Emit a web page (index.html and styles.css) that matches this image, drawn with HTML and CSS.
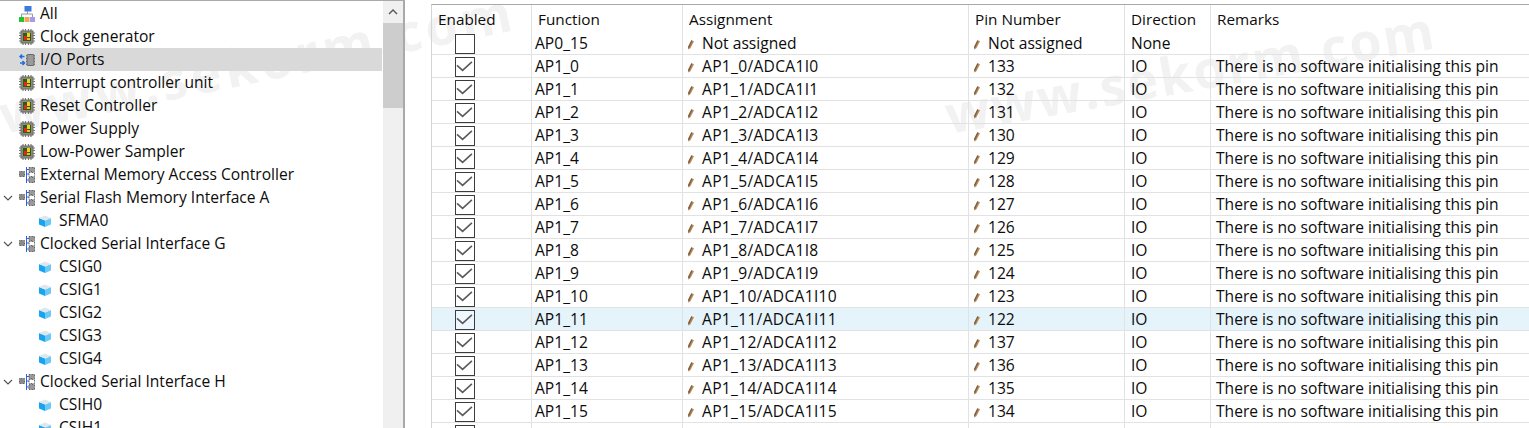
FILE: index.html
```html
<!DOCTYPE html>
<html lang="en">
<head>
<meta charset="utf-8">
<title>Pins</title>
<link rel="stylesheet" href="styles.css">
</head>
<body>
<svg class="defs" width="0" height="0" aria-hidden="true">
  <symbol id="i-all" viewBox="0 0 16 16">
    <rect x="5.500" y="0" width="7" height="5.500" fill="#3f78e0"/><path d="M8.500 5v3M2.500 11V8h11v3" fill="none" stroke="#9a9a9a"/>
    <rect x="0" y="11" width="5" height="5" fill="#22c52e"/><rect x="5.500" y="11" width="5" height="5" fill="#f2a65a"/><rect x="11" y="11" width="5" height="5" fill="#a59af0"/>
  </symbol>
  <symbol id="i-chip" viewBox="0 0 16 16">
    <path d="M0 4h16M0 6.500h16M0 9.500h16M0 12h16M4 0v16M6.500 0v16M9.500 0v16M12 0v16" stroke="#777" stroke-width="1.200"/>
    <rect x="2" y="2" width="12" height="12" fill="#8b8d78" stroke="#6a6a6a"/>
    <rect x="4" y="4" width="8" height="8" fill="#2f5a1e"/><rect x="8" y="4" width="3" height="4" fill="#f2d21e"/><rect x="5" y="7" width="3" height="4" fill="#d92a1c"/><rect x="8" y="9" width="3" height="2" fill="#e8c020"/>
  </symbol>
  <symbol id="i-io" viewBox="0 0 16 16">
    <path d="M5.500 4.500H1m2-2-2 2 2 2M1 11h4.500M3.500 9l2 2-2 2" fill="none" stroke="#1c6fe0" stroke-width="1.500"/>
    <path d="M7 3.500h9M7 6.500h9M7 9.500h9M7 12.500h9" stroke="#777" stroke-dasharray="1 .6"/><rect x="8" y="2.500" width="7" height="11" rx="1" fill="#9a9a9a" stroke="#666"/>
  </symbol>
  <symbol id="i-group" viewBox="0 0 16 16">
    <rect x="0.500" y="4.500" width="5" height="5" fill="#8a8a8a" stroke="#666" stroke-dasharray="1 .5"/>
    <path d="M7.500 0v16M7.500 2.500h3M7.500 7h3M7.500 13h3" stroke="#2b5fe8" fill="none"/>
    <rect x="10" y="0.500" width="5.500" height="4" fill="#999" stroke="#666" stroke-dasharray="1 .5"/><rect x="10" y="5.500" width="5.500" height="4" fill="#fff" stroke="#666" stroke-dasharray="1 .5"/><rect x="10" y="10.500" width="5.500" height="5" fill="#999" stroke="#666" stroke-dasharray="1 .5"/>
  </symbol>
  <symbol id="i-cube" viewBox="0 0 12 12">
    <path d="M0 3 6 5.500V12L0 9.500Z" fill="#18a4ee"/><path d="M6 5.500 12 3v6.500L6 12Z" fill="#6cc8f6"/><path d="M0 3 6 .5 12 3 6 5.500Z" fill="#dfe7ec"/>
  </symbol>
  <symbol id="i-chev" viewBox="0 0 10 6"><path d="M1 1l4 4 4-4" fill="none" stroke="#555" stroke-width="1.200"/></symbol>
  <symbol id="i-pen" viewBox="0 0 6 10"><path d="M3.400 .2 6 1.300 2.400 8.200 .2 9.600 0 7Z" fill="#b98a5c"/><path d="M3.400 .2 4.400 .7 1 8.500 0 7Z" fill="#7d5f42"/></symbol>
  <symbol id="i-check" viewBox="0 0 17 17"><path d="M1 7.300 6.600 12.300 15.900 3.900" fill="none" stroke="#5a5a5a" stroke-width="1.600"/></symbol>
</svg>

<div class="app">
  <div class="mark mark-left">www.sekorm.com</div>
  <div class="mark mark-right">www.sekorm.com</div>

  <aside class="side">
    <ul class="tree">
      <li class="node"><span class="twist"></span><svg class="ico"><use href="#i-all"/></svg><span class="label">All</span></li>
      <li class="node"><span class="twist"></span><svg class="ico"><use href="#i-chip"/></svg><span class="label">Clock generator</span></li>
      <li class="node sel"><span class="twist"></span><svg class="ico"><use href="#i-io"/></svg><span class="label">I/O Ports</span></li>
      <li class="node"><span class="twist"></span><svg class="ico"><use href="#i-chip"/></svg><span class="label">Interrupt controller unit</span></li>
      <li class="node"><span class="twist"></span><svg class="ico"><use href="#i-chip"/></svg><span class="label">Reset Controller</span></li>
      <li class="node"><span class="twist"></span><svg class="ico"><use href="#i-chip"/></svg><span class="label">Power Supply</span></li>
      <li class="node"><span class="twist"></span><svg class="ico"><use href="#i-chip"/></svg><span class="label">Low-Power Sampler</span></li>
      <li class="node"><span class="twist"></span><svg class="ico"><use href="#i-group"/></svg><span class="label">External Memory Access Controller</span></li>
      <li class="node"><span class="twist"><svg class="chev"><use href="#i-chev"/></svg></span><svg class="ico"><use href="#i-group"/></svg><span class="label">Serial Flash Memory Interface A</span></li>
      <li class="node leaf"><svg class="cube"><use href="#i-cube"/></svg><span class="label">SFMA0</span></li>
      <li class="node"><span class="twist"><svg class="chev"><use href="#i-chev"/></svg></span><svg class="ico"><use href="#i-group"/></svg><span class="label">Clocked Serial Interface G</span></li>
      <li class="node leaf"><svg class="cube"><use href="#i-cube"/></svg><span class="label">CSIG0</span></li>
      <li class="node leaf"><svg class="cube"><use href="#i-cube"/></svg><span class="label">CSIG1</span></li>
      <li class="node leaf"><svg class="cube"><use href="#i-cube"/></svg><span class="label">CSIG2</span></li>
      <li class="node leaf"><svg class="cube"><use href="#i-cube"/></svg><span class="label">CSIG3</span></li>
      <li class="node leaf"><svg class="cube"><use href="#i-cube"/></svg><span class="label">CSIG4</span></li>
      <li class="node"><span class="twist"><svg class="chev"><use href="#i-chev"/></svg></span><svg class="ico"><use href="#i-group"/></svg><span class="label">Clocked Serial Interface H</span></li>
      <li class="node leaf"><svg class="cube"><use href="#i-cube"/></svg><span class="label">CSIH0</span></li>
      <li class="node leaf"><svg class="cube"><use href="#i-cube"/></svg><span class="label">CSIH1</span></li>
    </ul>
    <div class="scrollbar">
      <div class="sb-up"><svg class="sb-arrow" viewBox="0 0 10 6"><path d="M1 5l4-4 4 4" fill="none" stroke="#555" stroke-width="1.400"/></svg></div>
      <div class="sb-thumb"></div>
    </div>
  </aside>

  <main class="pane">
    <div class="grid-frame">
      <table class="grid">
        <colgroup><col class="c1"><col class="c2"><col class="c3"><col class="c4"><col class="c5"><col></colgroup>
        <thead>
          <tr><th>Enabled</th><th>Function</th><th>Assignment</th><th>Pin Number</th><th>Direction</th><th>Remarks</th></tr>
        </thead>
        <tbody>
          <tr><td><span class="box"></span></td><td>AP0_15</td><td><svg class="pen"><use href="#i-pen"/></svg>Not assigned</td><td><svg class="pen"><use href="#i-pen"/></svg>Not assigned</td><td>None</td><td></td></tr>
          <tr><td><span class="box"><svg class="chk"><use href="#i-check"/></svg></span></td><td>AP1_0</td><td class="sig"><svg class="pen"><use href="#i-pen"/></svg>AP1_0/ADCA1I0</td><td><svg class="pen"><use href="#i-pen"/></svg>133</td><td>IO</td><td>There is no software initialising this pin</td></tr>
          <tr><td><span class="box"><svg class="chk"><use href="#i-check"/></svg></span></td><td>AP1_1</td><td class="sig"><svg class="pen"><use href="#i-pen"/></svg>AP1_1/ADCA1I1</td><td><svg class="pen"><use href="#i-pen"/></svg>132</td><td>IO</td><td>There is no software initialising this pin</td></tr>
          <tr><td><span class="box"><svg class="chk"><use href="#i-check"/></svg></span></td><td>AP1_2</td><td class="sig"><svg class="pen"><use href="#i-pen"/></svg>AP1_2/ADCA1I2</td><td><svg class="pen"><use href="#i-pen"/></svg>131</td><td>IO</td><td>There is no software initialising this pin</td></tr>
          <tr><td><span class="box"><svg class="chk"><use href="#i-check"/></svg></span></td><td>AP1_3</td><td class="sig"><svg class="pen"><use href="#i-pen"/></svg>AP1_3/ADCA1I3</td><td><svg class="pen"><use href="#i-pen"/></svg>130</td><td>IO</td><td>There is no software initialising this pin</td></tr>
          <tr><td><span class="box"><svg class="chk"><use href="#i-check"/></svg></span></td><td>AP1_4</td><td class="sig"><svg class="pen"><use href="#i-pen"/></svg>AP1_4/ADCA1I4</td><td><svg class="pen"><use href="#i-pen"/></svg>129</td><td>IO</td><td>There is no software initialising this pin</td></tr>
          <tr><td><span class="box"><svg class="chk"><use href="#i-check"/></svg></span></td><td>AP1_5</td><td class="sig"><svg class="pen"><use href="#i-pen"/></svg>AP1_5/ADCA1I5</td><td><svg class="pen"><use href="#i-pen"/></svg>128</td><td>IO</td><td>There is no software initialising this pin</td></tr>
          <tr><td><span class="box"><svg class="chk"><use href="#i-check"/></svg></span></td><td>AP1_6</td><td class="sig"><svg class="pen"><use href="#i-pen"/></svg>AP1_6/ADCA1I6</td><td><svg class="pen"><use href="#i-pen"/></svg>127</td><td>IO</td><td>There is no software initialising this pin</td></tr>
          <tr><td><span class="box"><svg class="chk"><use href="#i-check"/></svg></span></td><td>AP1_7</td><td class="sig"><svg class="pen"><use href="#i-pen"/></svg>AP1_7/ADCA1I7</td><td><svg class="pen"><use href="#i-pen"/></svg>126</td><td>IO</td><td>There is no software initialising this pin</td></tr>
          <tr><td><span class="box"><svg class="chk"><use href="#i-check"/></svg></span></td><td>AP1_8</td><td class="sig"><svg class="pen"><use href="#i-pen"/></svg>AP1_8/ADCA1I8</td><td><svg class="pen"><use href="#i-pen"/></svg>125</td><td>IO</td><td>There is no software initialising this pin</td></tr>
          <tr><td><span class="box"><svg class="chk"><use href="#i-check"/></svg></span></td><td>AP1_9</td><td class="sig"><svg class="pen"><use href="#i-pen"/></svg>AP1_9/ADCA1I9</td><td><svg class="pen"><use href="#i-pen"/></svg>124</td><td>IO</td><td>There is no software initialising this pin</td></tr>
          <tr><td><span class="box"><svg class="chk"><use href="#i-check"/></svg></span></td><td>AP1_10</td><td class="sig"><svg class="pen"><use href="#i-pen"/></svg>AP1_10/ADCA1I10</td><td><svg class="pen"><use href="#i-pen"/></svg>123</td><td>IO</td><td>There is no software initialising this pin</td></tr>
          <tr class="hover"><td><span class="box"><svg class="chk"><use href="#i-check"/></svg></span></td><td>AP1_11</td><td class="sig"><svg class="pen"><use href="#i-pen"/></svg>AP1_11/ADCA1I11</td><td><svg class="pen"><use href="#i-pen"/></svg>122</td><td>IO</td><td>There is no software initialising this pin</td></tr>
          <tr><td><span class="box"><svg class="chk"><use href="#i-check"/></svg></span></td><td>AP1_12</td><td class="sig"><svg class="pen"><use href="#i-pen"/></svg>AP1_12/ADCA1I12</td><td><svg class="pen"><use href="#i-pen"/></svg>137</td><td>IO</td><td>There is no software initialising this pin</td></tr>
          <tr><td><span class="box"><svg class="chk"><use href="#i-check"/></svg></span></td><td>AP1_13</td><td class="sig"><svg class="pen"><use href="#i-pen"/></svg>AP1_13/ADCA1I13</td><td><svg class="pen"><use href="#i-pen"/></svg>136</td><td>IO</td><td>There is no software initialising this pin</td></tr>
          <tr><td><span class="box"><svg class="chk"><use href="#i-check"/></svg></span></td><td>AP1_14</td><td class="sig"><svg class="pen"><use href="#i-pen"/></svg>AP1_14/ADCA1I14</td><td><svg class="pen"><use href="#i-pen"/></svg>135</td><td>IO</td><td>There is no software initialising this pin</td></tr>
          <tr><td><span class="box"><svg class="chk"><use href="#i-check"/></svg></span></td><td>AP1_15</td><td class="sig"><svg class="pen"><use href="#i-pen"/></svg>AP1_15/ADCA1I15</td><td><svg class="pen"><use href="#i-pen"/></svg>134</td><td>IO</td><td>There is no software initialising this pin</td></tr>
          <tr><td><span class="box"></span></td><td></td><td></td><td></td><td></td><td></td></tr>
        </tbody>
      </table>
    </div>
  </main>
</div>
</body>
</html>
```
FILE: styles.css
```css
html, body { margin: 0; padding: 0; height: 100%; overflow: hidden; background: #fff; }
body { font-family: "Open Sans", "Noto Sans", sans-serif; font-size: 15.6px; color: #0c0c0c; }
.defs { position: absolute; }

.app { position: relative; display: flex; height: 428px; width: 1529px; overflow: hidden; }

.mark { position: absolute; z-index: 0; font-family: "Open Sans", sans-serif; font-weight: 700; line-height: 1; color: #f2f2f2; white-space: nowrap; transform-origin: left bottom; pointer-events: none; }
.mark-left { left: 5px; top: 88px; font-size: 52px; letter-spacing: 4px; transform: rotate(-11.500deg); }
.mark-right { left: 950px; top: 88px; font-size: 52px; letter-spacing: 2px; transform: rotate(-10deg); }

.side { position: relative; z-index: 1; flex: none; width: 403px; height: 428px; display: flex; border-top: 1px solid #a9a9a9; border-right: 2px solid #a9a9a9; }
.tree { list-style: none; margin: 1px 0 0; padding: 0; width: 382px; flex: none; overflow: hidden; }
.node { display: flex; align-items: center; height: 23px; white-space: nowrap; }
.label { margin-bottom: 2px; }
.node.sel { background: #d9d9d9; }
.twist { flex: none; width: 19px; display: flex; justify-content: flex-start; padding-left: 3px; box-sizing: border-box; }
.chev { width: 10px; height: 6px; }
.ico { flex: none; width: 16px; height: 16px; margin-right: 5px; }
.leaf { padding-left: 39px; }
.cube { flex: none; width: 12px; height: 12px; margin-right: 8px; }

.scrollbar { flex: none; width: 20px; margin-left: 1px; background: #f0f0f0; }
.sb-up { height: 22px; display: flex; align-items: center; justify-content: center; }
.sb-arrow { width: 10px; height: 6px; }
.sb-thumb { height: 85px; background: #cdcdcd; }

.pane { position: relative; z-index: 1; flex: 1; min-width: 0; padding: 4px 0 0 26px; }
.grid-frame { border-top: 1px solid #a9a9a9; border-left: 1px solid #d4d4d4; }
.grid { table-layout: fixed; border-collapse: separate; border-spacing: 0; width: 1098px; }
.c1 { width: 100px; }
.c2 { width: 151px; }
.c3 { width: 286px; }
.c4 { width: 156px; }
.c5 { width: 86px; }

.grid th { height: 27px; padding: 0 0 0 6px; box-sizing: border-box; text-align: left; font-weight: 400; font-size: 15.300px; border-right: 1px solid #e2e2e2; white-space: nowrap; overflow: hidden; }
.grid td { height: 23px; padding: 0 0 0 3px; box-sizing: border-box; border-right: 1px solid #e2e2e2; border-bottom: 1px solid #e2e2e2; white-space: nowrap; overflow: hidden; line-height: 20px; }
.grid td:first-child { padding: 0 0 0 23px; }
.grid td:nth-child(3), .grid td:nth-child(4) { padding-left: 5px; }
.grid td:nth-child(5) { padding-left: 6px; }
.grid td:nth-child(6) { padding-left: 5px; }
.grid td.sig { letter-spacing: .3px; }
.grid th:last-child, .grid td:last-child { border-right: 0; }
.hover td { background: #e5f3fb; }

.box { display: block; box-sizing: border-box; width: 20px; height: 20px; margin-top: 1px; border: 1.400px solid #3c3c3c; background: #fff; }
.hover .box { background: #eef7fd; }
.chk { display: block; width: 17px; height: 17px; }
.pen { display: inline-block; vertical-align: -1px; width: 6px; height: 10px; margin-right: 8px; letter-spacing: 0; }
```
